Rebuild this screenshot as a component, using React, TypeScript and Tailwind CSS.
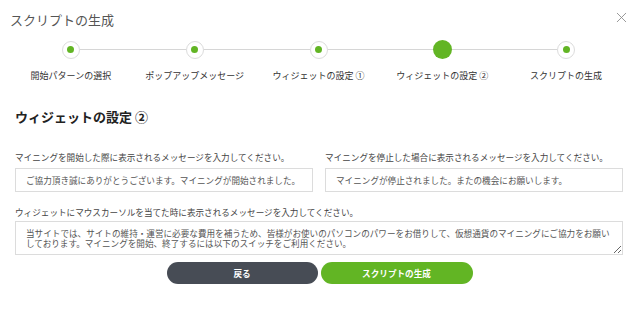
import { X } from "lucide-react";

const steps = [
  "開始パターンの選択",
  "ポップアップメッセージ",
  "ウィジェットの設定 ①",
  "ウィジェットの設定 ②",
  "スクリプトの生成",
];
const active = 3;

const font = { fontFamily: '"Noto Sans CJK JP", "Noto Sans", sans-serif' };

export default function App() {
  return (
    <div className="w-[639px] h-[312px] bg-white text-[#444] overflow-hidden" style={font}>
      {/* header */}
      <div className="flex h-[38px] items-center justify-between pl-[10px] pr-[9px]">
        <h1 className="text-[13px] text-[#555] leading-none">スクリプトの生成</h1>
        <X className="w-[17px] h-[17px] text-[#888] -mt-[3px]" strokeWidth={1.2} />
      </div>

      {/* stepper */}
      <div className="grid grid-cols-5 pl-[9px] pr-[11px] mt-[2px]">
        {steps.map((s, i) => (
          <div key={s} className="flex flex-col items-center">
            <div className="flex w-full items-center h-[19px]">
              <div className={i === 0 ? "flex-1 h-px" : "flex-1 h-px bg-[#d6d6d6]"} />
              {i === active ? (
                <div className="w-[19px] h-[19px] rounded-full bg-[#62b524]" />
              ) : (
                <div className="w-[18px] h-[18px] rounded-full border-[1.5px] border-[#dcdcdc] bg-white flex items-center justify-center">
                  <div className="w-[7px] h-[7px] rounded-full bg-[#62b524]" />
                </div>
              )}
              <div className={i === steps.length - 1 ? "flex-1 h-px" : "flex-1 h-px bg-[#d6d6d6]"} />
            </div>
            <div className="mt-[11px] text-[9px] leading-[12px] text-[#333] whitespace-nowrap">{s}</div>
          </div>
        ))}
      </div>

      <div className="pl-[15px] pr-[16px]">
        <h2 className="mt-[27px] text-[13px] leading-[16px] font-bold text-[#222]">ウィジェットの設定 ②</h2>

        <div className="grid grid-cols-2 gap-x-[12px] mt-[26px]">
          <div>
            <div className="text-[8.6px] leading-[12px] whitespace-nowrap">
              マイニングを開始した際に表示されるメッセージを入力してください。
            </div>
            <input
              className="mt-[5px] block w-full h-[24px] border border-[#dcdcdc] pl-[10px] text-[8.6px] text-[#555] outline-none"
              defaultValue="ご協力頂き誠にありがとうございます。マイニングが開始されました。"
            />
          </div>
          <div>
            <div className="text-[8.6px] leading-[12px] whitespace-nowrap">
              マイニングを停止した場合に表示されるメッセージを入力してください。
            </div>
            <input
              className="mt-[5px] block w-full h-[24px] border border-[#dcdcdc] pl-[10px] text-[8.6px] text-[#555] outline-none"
              defaultValue="マイニングが停止されました。またの機会にお願いします。"
            />
          </div>
        </div>

        <div className="mt-[14px] text-[8.6px] leading-[12px] whitespace-nowrap">
          ウィジェットにマウスカーソルを当てた時に表示されるメッセージを入力してください。
        </div>
        <textarea
          className="mt-[3px] block w-full h-[34px] border border-[#dcdcdc] pl-[10px] pr-[12px] pt-[6px] text-[8.6px] leading-[10px] text-[#555] outline-none resize-y"
          defaultValue="当サイトでは、サイトの維持・運営に必要な費用を補うため、皆様がお使いのパソコンのパワーをお借りして、仮想通貨のマイニングにご協力をお願いしております。マイニングを開始、終了するには以下のスイッチをご利用ください。"
        />
      </div>

      <div className="flex justify-center gap-[3px] mt-[7px]">
        <button className="w-[151px] h-[22px] rounded-full bg-[#474c55] text-white text-[8.6px] font-bold">
          戻る
        </button>
        <button className="w-[152px] h-[22px] rounded-full bg-[#62b524] text-white text-[8.6px] font-bold">
          スクリプトの生成
        </button>
      </div>
    </div>
  );
}
